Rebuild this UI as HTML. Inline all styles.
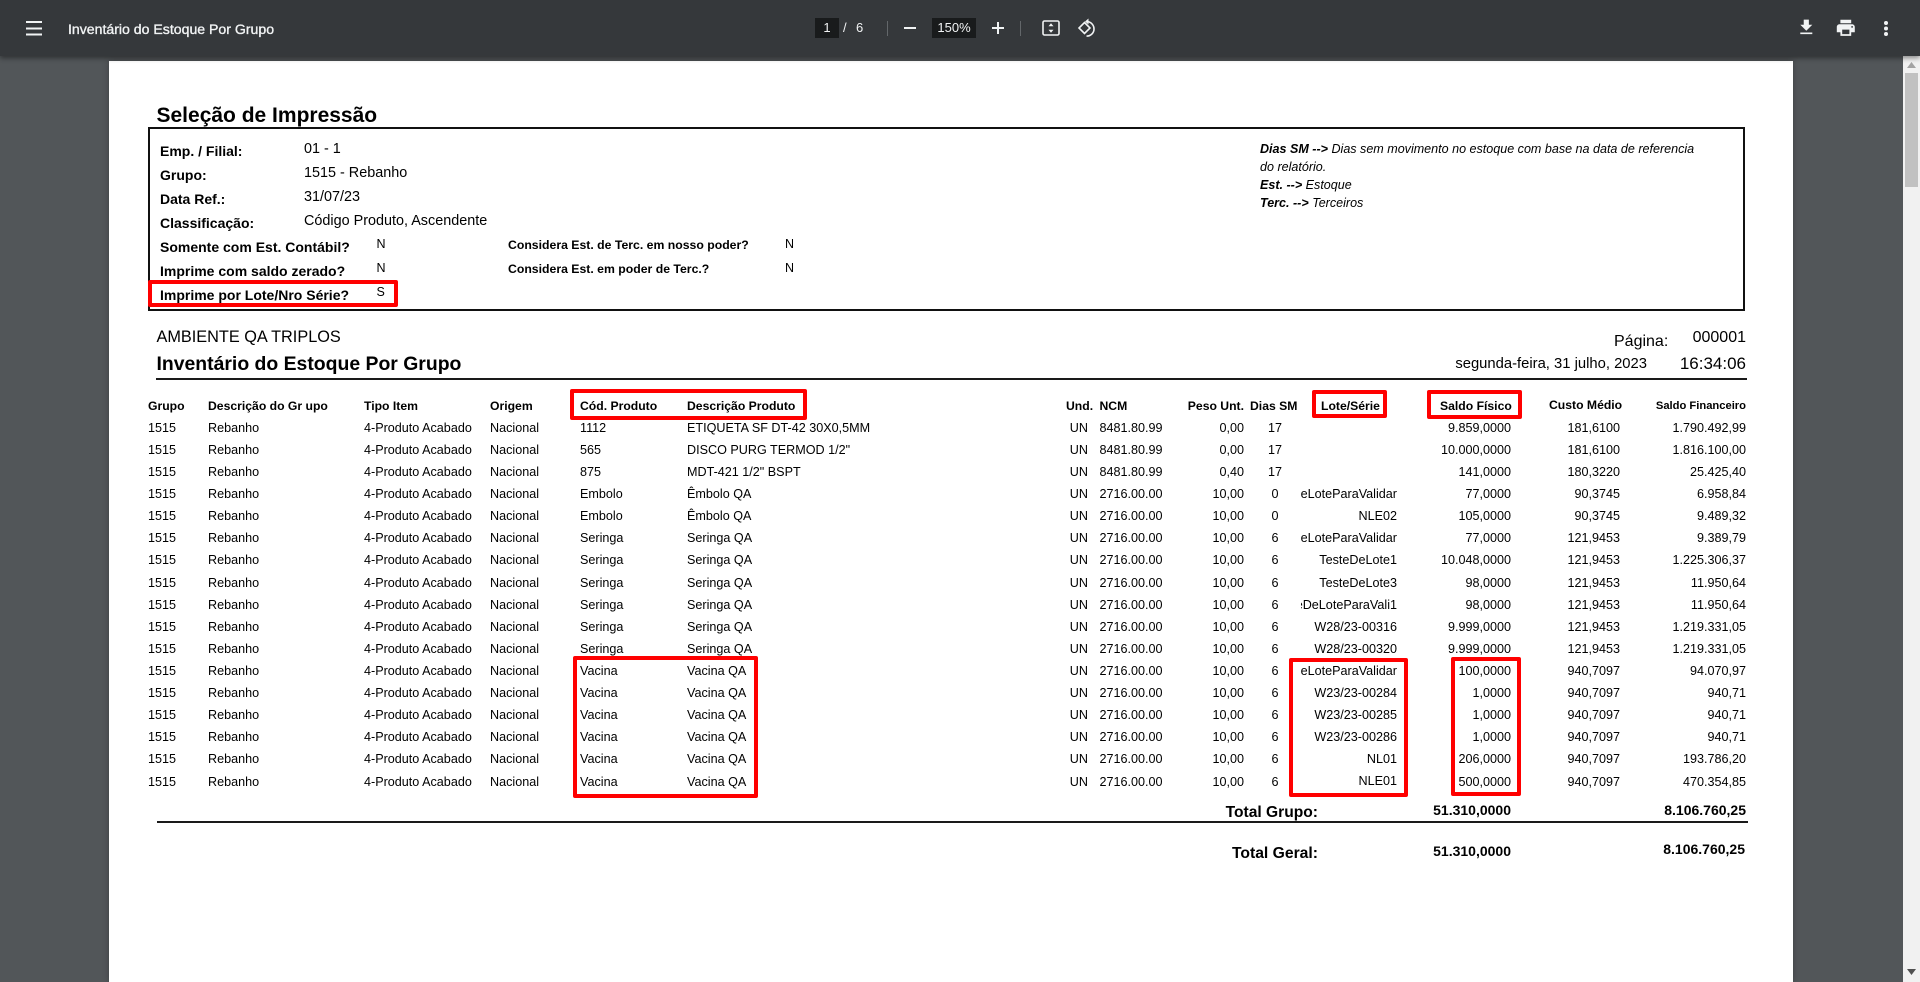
<!DOCTYPE html>
<html lang="pt">
<head>
<meta charset="utf-8">
<title>Inventário do Estoque Por Grupo</title>
<style>
html,body{margin:0;padding:0;width:1920px;height:982px;overflow:hidden;background:#525659}
body{position:relative;font-family:"Liberation Sans",Arial,sans-serif;color:#000}
div,span,svg{position:absolute;white-space:nowrap}
#tb{left:0;top:0;width:1920px;height:56px;background:#35383b;box-shadow:0 2px 5px rgba(0,0,0,.45);z-index:5;color:#f1f3f4}
#pg{left:109px;top:61px;width:1684px;height:921px;background:#fff;box-shadow:0 0 6px rgba(0,0,0,.25)}
#sb{left:1903px;top:56px;width:17px;height:926px;background:#f1f1f1;z-index:4}
#th{left:2px;top:17px;width:13px;height:114px;background:#c1c1c1}
.bx{background:#191b1c;height:20px;top:18px;line-height:20px;text-align:center;font-size:13px}
.sp{width:1px;height:15px;top:21px;background:#63676a}
.a{position:absolute}
.l{font-weight:bold;font-size:14px;left:160px;line-height:20px}
.v{font-size:14.4px;left:304px;line-height:20px}
.n{font-size:12.5px;line-height:16px}
.b{font-weight:bold;font-size:12.25px;line-height:16px}
.i{font-style:italic;font-size:12.55px;left:1260px;line-height:18px}
.r{left:0;width:1920px;height:22px;line-height:22px;font-size:12.6px}
.r span{top:0}
.g{left:148px}.d{left:208px}.t{left:364px}.o{left:490px}.c{left:580px}.e{left:687px}
.u{right:832px}.m{left:1099.5px}.w{right:676px}
.s{left:1255px;width:40px;text-align:center}
.lt{left:1300.5px;width:96.5px;overflow:hidden;display:flex;justify-content:flex-end}
.lt i{font-style:normal;flex:none}
.f{right:409px}.x{right:300px}.y{right:174px}
.h{top:398px;font-weight:bold;font-size:12.2px;line-height:16px}
.red{border:4px solid #f00;border-radius:2px;box-sizing:border-box;z-index:3}
.ln{background:#1a1a1a;height:2px}
</style>
</head>
<body>
<div id="pg"></div>

<div id="tb">
  <svg style="left:26px;top:21px" width="16" height="15" viewBox="0 0 16 15"><path d="M0 1h16M0 7.500h16M0 13.500h16" stroke="#f1f3f4" stroke-width="2"/></svg>
  <span style="left:68px;top:20px;font-size:14.1px;line-height:18px;-webkit-text-stroke:.35px #f1f3f4">Inventário do Estoque Por Grupo</span>
  <div class="bx" style="left:815px;width:24px">1</div>
  <span style="left:843px;top:19px;font-size:13px;line-height:18px">/</span>
  <span style="left:856px;top:19px;font-size:13px;line-height:18px">6</span>
  <div class="sp" style="left:887px"></div>
  <div style="left:904px;top:27px;width:12px;height:2px;background:#f1f3f4"></div>
  <div class="bx" style="left:932px;width:44px">150%</div>
  <svg style="left:992px;top:22px" width="12" height="12" viewBox="0 0 12 12"><path d="M0 6h12M6 0v12" stroke="#f1f3f4" stroke-width="2"/></svg>
  <div class="sp" style="left:1020px"></div>
  <svg style="left:1042px;top:20px" width="18" height="16" viewBox="0 0 18 16"><rect x="1" y="1" width="16" height="14" rx="1.500" fill="none" stroke="#f1f3f4" stroke-width="1.600"/><path d="M9 3.200l2.500 3H6.500zM9 12.800l2.500-3H6.500z" fill="#f1f3f4"/></svg>
  <svg style="left:1077px;top:18px" width="20" height="20" viewBox="0 0 20 20"><path d="M7.500 4.500l5.500 5.500-5.500 5.500-5.500-5.500z" fill="none" stroke="#f1f3f4" stroke-width="1.600"/><path d="M10 3.500a7.500 7.500 0 0 1 7 7.500 7 7 0 0 1-7.500 7" fill="none" stroke="#f1f3f4" stroke-width="1.600"/><path d="M11.500 .500v6l-3.500-3z" fill="#f1f3f4"/></svg>
  <svg style="left:1795.7px;top:17.400px" width="20.600" height="20.600" viewBox="0 0 24 24"><path fill="#f1f3f4" d="M19 9h-4V3H9v6H5l7 7 7-7zM5 18v2h14v-2H5z"/></svg>
  <svg style="left:1835.200px;top:17.300px" width="21.600" height="21.600" viewBox="0 0 24 24"><path fill="#f1f3f4" d="M19 8H5c-1.660 0-3 1.340-3 3v6h4v4h12v-4h4v-6c0-1.660-1.340-3-3-3zm-3 11H8v-5h8v5zm3-7c-.55 0-1-.45-1-1s.45-1 1-1 1 .45 1 1-.45 1-1 1zm-1-9H6v4h12V3z"/></svg>
  <svg style="left:1884px;top:21px" width="4" height="15" viewBox="0 0 4 15"><circle cx="2" cy="2" r="2" fill="#f1f3f4"/><circle cx="2" cy="7.500" r="2" fill="#f1f3f4"/><circle cx="2" cy="13" r="2" fill="#f1f3f4"/></svg>
</div>

<div id="sb">
  <svg style="left:4px;top:6px" width="9" height="6"><path d="M4.500 0L9 6H0z" fill="#a3a3a3"/></svg>
  <div id="th"></div>
  <svg style="left:4px;top:913px" width="9" height="6"><path d="M0 0h9L4.500 6z" fill="#505050"/></svg>
</div>

<span class="a" style="left:156.500px;top:103px;font-size:21px;font-weight:bold;line-height:26px">Seleção de Impressão</span>
<div style="left:148px;top:127px;width:1597px;height:184px;border:2px solid #111;box-sizing:border-box"></div>

<span class="l" style="top:141px">Emp. / Filial:</span>
<span class="l" style="top:165px">Grupo:</span>
<span class="l" style="top:189px">Data Ref.:</span>
<span class="l" style="top:213px">Classificação:</span>
<span class="l" style="top:237px">Somente com Est. Contábil?</span>
<span class="l" style="top:261px">Imprime com saldo zerado?</span>
<span class="l" style="top:285px">Imprime por Lote/Nro Série?</span>
<span class="v" style="top:139px">01 - 1</span>
<span class="v" style="top:163px">1515 - Rebanho</span>
<span class="v" style="top:187px">31/07/23</span>
<span class="v" style="top:211px">Código Produto, Ascendente</span>
<span class="n" style="left:376.500px;top:236px">N</span>
<span class="n" style="left:376.500px;top:260px">N</span>
<span class="n" style="left:376.500px;top:284px">S</span>
<span class="b" style="left:508px;top:237px">Considera Est. de Terc. em nosso poder?</span>
<span class="b" style="left:508px;top:261px">Considera Est. em poder de Terc.?</span>
<span class="n" style="left:785px;top:236px">N</span>
<span class="n" style="left:785px;top:260px">N</span>
<span class="i" style="top:140px"><b>Dias SM --&gt;</b> Dias sem movimento no estoque com base na data de referencia</span>
<span class="i" style="top:158px">do relatório.</span>
<span class="i" style="top:176px"><b>Est. --&gt;</b> Estoque</span>
<span class="i" style="top:194px"><b>Terc. --&gt;</b> Terceiros</span>

<span class="a" style="left:156.500px;top:327px;font-size:16.3px;line-height:20px">AMBIENTE QA TRIPLOS</span>
<span class="a" style="left:156.500px;top:352px;font-size:19.4px;font-weight:bold;line-height:24px">Inventário do Estoque Por Grupo</span>
<span class="a" style="left:1614px;top:332px;font-size:16px;line-height:20px">Página:</span>
<span class="a" style="right:174px;top:328px;font-size:16px;line-height:20px">000001</span>
<span class="a" style="right:273px;top:354px;font-size:14.8px;line-height:20px">segunda-feira, 31 julho, 2023</span>
<span class="a" style="right:174px;top:354px;font-size:17px;line-height:20px">16:34:06</span>
<div class="ln" style="left:155.500px;top:378px;width:1591.500px"></div>

<span class="h g">Grupo</span>
<span class="h d">Descrição do Gr upo</span>
<span class="h t">Tipo Item</span>
<span class="h o">Origem</span>
<span class="h c">Cód. Produto</span>
<span class="h e">Descrição Produto</span>
<span class="h" style="left:1066px">Und.</span>
<span class="h m">NCM</span>
<span class="h" style="right:676px">Peso Unt.</span>
<span class="h" style="left:1250px">Dias SM</span>
<span class="h" style="left:1321px">Lote/Série</span>
<span class="h" style="left:1440px">Saldo Físico</span>
<span class="h" style="left:1549px;top:397px">Custo Médio</span>
<span class="h" style="right:174px;font-size:11.200px">Saldo Financeiro</span>

<div class="r" style="top:417px"><span class="g">1515</span><span class="d">Rebanho</span><span class="t">4-Produto Acabado</span><span class="o">Nacional</span><span class="c">1112</span><span class="e">ETIQUETA SF DT-42 30X0,5MM</span><span class="u">UN</span><span class="m">8481.80.99</span><span class="w">0,00</span><span class="s">17</span><span class="f">9.859,0000</span><span class="x">181,6100</span><span class="y">1.790.492,99</span></div>
<div class="r" style="top:439px"><span class="g">1515</span><span class="d">Rebanho</span><span class="t">4-Produto Acabado</span><span class="o">Nacional</span><span class="c">565</span><span class="e">DISCO PURG TERMOD 1/2"</span><span class="u">UN</span><span class="m">8481.80.99</span><span class="w">0,00</span><span class="s">17</span><span class="f">10.000,0000</span><span class="x">181,6100</span><span class="y">1.816.100,00</span></div>
<div class="r" style="top:461px"><span class="g">1515</span><span class="d">Rebanho</span><span class="t">4-Produto Acabado</span><span class="o">Nacional</span><span class="c">875</span><span class="e">MDT-421 1/2" BSPT</span><span class="u">UN</span><span class="m">8481.80.99</span><span class="w">0,40</span><span class="s">17</span><span class="f">141,0000</span><span class="x">180,3220</span><span class="y">25.425,40</span></div>
<div class="r" style="top:483px"><span class="g">1515</span><span class="d">Rebanho</span><span class="t">4-Produto Acabado</span><span class="o">Nacional</span><span class="c">Embolo</span><span class="e">Êmbolo QA</span><span class="u">UN</span><span class="m">2716.00.00</span><span class="w">10,00</span><span class="s">0</span><span class="lt"><i>TesteDeLoteParaValidar</i></span><span class="f">77,0000</span><span class="x">90,3745</span><span class="y">6.958,84</span></div>
<div class="r" style="top:505px"><span class="g">1515</span><span class="d">Rebanho</span><span class="t">4-Produto Acabado</span><span class="o">Nacional</span><span class="c">Embolo</span><span class="e">Êmbolo QA</span><span class="u">UN</span><span class="m">2716.00.00</span><span class="w">10,00</span><span class="s">0</span><span class="lt"><i>NLE02</i></span><span class="f">105,0000</span><span class="x">90,3745</span><span class="y">9.489,32</span></div>
<div class="r" style="top:527px"><span class="g">1515</span><span class="d">Rebanho</span><span class="t">4-Produto Acabado</span><span class="o">Nacional</span><span class="c">Seringa</span><span class="e">Seringa QA</span><span class="u">UN</span><span class="m">2716.00.00</span><span class="w">10,00</span><span class="s">6</span><span class="lt"><i>TesteDeLoteParaValidar</i></span><span class="f">77,0000</span><span class="x">121,9453</span><span class="y">9.389,79</span></div>
<div class="r" style="top:549px"><span class="g">1515</span><span class="d">Rebanho</span><span class="t">4-Produto Acabado</span><span class="o">Nacional</span><span class="c">Seringa</span><span class="e">Seringa QA</span><span class="u">UN</span><span class="m">2716.00.00</span><span class="w">10,00</span><span class="s">6</span><span class="lt"><i>TesteDeLote1</i></span><span class="f">10.048,0000</span><span class="x">121,9453</span><span class="y">1.225.306,37</span></div>
<div class="r" style="top:572px"><span class="g">1515</span><span class="d">Rebanho</span><span class="t">4-Produto Acabado</span><span class="o">Nacional</span><span class="c">Seringa</span><span class="e">Seringa QA</span><span class="u">UN</span><span class="m">2716.00.00</span><span class="w">10,00</span><span class="s">6</span><span class="lt"><i>TesteDeLote3</i></span><span class="f">98,0000</span><span class="x">121,9453</span><span class="y">11.950,64</span></div>
<div class="r" style="top:594px"><span class="g">1515</span><span class="d">Rebanho</span><span class="t">4-Produto Acabado</span><span class="o">Nacional</span><span class="c">Seringa</span><span class="e">Seringa QA</span><span class="u">UN</span><span class="m">2716.00.00</span><span class="w">10,00</span><span class="s">6</span><span class="lt"><i>TesteDeLoteParaVali1</i></span><span class="f">98,0000</span><span class="x">121,9453</span><span class="y">11.950,64</span></div>
<div class="r" style="top:616px"><span class="g">1515</span><span class="d">Rebanho</span><span class="t">4-Produto Acabado</span><span class="o">Nacional</span><span class="c">Seringa</span><span class="e">Seringa QA</span><span class="u">UN</span><span class="m">2716.00.00</span><span class="w">10,00</span><span class="s">6</span><span class="lt"><i>W28/23-00316</i></span><span class="f">9.999,0000</span><span class="x">121,9453</span><span class="y">1.219.331,05</span></div>
<div class="r" style="top:638px"><span class="g">1515</span><span class="d">Rebanho</span><span class="t">4-Produto Acabado</span><span class="o">Nacional</span><span class="c">Seringa</span><span class="e">Seringa QA</span><span class="u">UN</span><span class="m">2716.00.00</span><span class="w">10,00</span><span class="s">6</span><span class="lt"><i>W28/23-00320</i></span><span class="f">9.999,0000</span><span class="x">121,9453</span><span class="y">1.219.331,05</span></div>
<div class="r" style="top:660px"><span class="g">1515</span><span class="d">Rebanho</span><span class="t">4-Produto Acabado</span><span class="o">Nacional</span><span class="c">Vacina</span><span class="e">Vacina QA</span><span class="u">UN</span><span class="m">2716.00.00</span><span class="w">10,00</span><span class="s">6</span><span class="lt"><i>TesteDeLoteParaValidar</i></span><span class="f">100,0000</span><span class="x">940,7097</span><span class="y">94.070,97</span></div>
<div class="r" style="top:682px"><span class="g">1515</span><span class="d">Rebanho</span><span class="t">4-Produto Acabado</span><span class="o">Nacional</span><span class="c">Vacina</span><span class="e">Vacina QA</span><span class="u">UN</span><span class="m">2716.00.00</span><span class="w">10,00</span><span class="s">6</span><span class="lt"><i>W23/23-00284</i></span><span class="f">1,0000</span><span class="x">940,7097</span><span class="y">940,71</span></div>
<div class="r" style="top:704px"><span class="g">1515</span><span class="d">Rebanho</span><span class="t">4-Produto Acabado</span><span class="o">Nacional</span><span class="c">Vacina</span><span class="e">Vacina QA</span><span class="u">UN</span><span class="m">2716.00.00</span><span class="w">10,00</span><span class="s">6</span><span class="lt"><i>W23/23-00285</i></span><span class="f">1,0000</span><span class="x">940,7097</span><span class="y">940,71</span></div>
<div class="r" style="top:726px"><span class="g">1515</span><span class="d">Rebanho</span><span class="t">4-Produto Acabado</span><span class="o">Nacional</span><span class="c">Vacina</span><span class="e">Vacina QA</span><span class="u">UN</span><span class="m">2716.00.00</span><span class="w">10,00</span><span class="s">6</span><span class="lt"><i>W23/23-00286</i></span><span class="f">1,0000</span><span class="x">940,7097</span><span class="y">940,71</span></div>
<div class="r" style="top:748px"><span class="g">1515</span><span class="d">Rebanho</span><span class="t">4-Produto Acabado</span><span class="o">Nacional</span><span class="c">Vacina</span><span class="e">Vacina QA</span><span class="u">UN</span><span class="m">2716.00.00</span><span class="w">10,00</span><span class="s">6</span><span class="lt"><i>NL01</i></span><span class="f">206,0000</span><span class="x">940,7097</span><span class="y">193.786,20</span></div>
<div class="r" style="top:771px"><span class="g">1515</span><span class="d">Rebanho</span><span class="t">4-Produto Acabado</span><span class="o">Nacional</span><span class="c">Vacina</span><span class="e">Vacina QA</span><span class="u">UN</span><span class="m">2716.00.00</span><span class="w">10,00</span><span class="s">6</span><span class="lt" style="top:-1px"><i>NLE01</i></span><span class="f">500,0000</span><span class="x">940,7097</span><span class="y">470.354,85</span></div>

<span class="a" style="right:602px;top:803px;font-size:15.6px;font-weight:bold;line-height:20px">Total Grupo:</span>
<span class="a" style="right:409px;top:801px;font-size:14px;font-weight:bold;line-height:18px">51.310,0000</span>
<span class="a" style="right:174px;top:801px;font-size:14px;font-weight:bold;line-height:18px">8.106.760,25</span>
<div class="ln" style="left:156.500px;top:821px;width:1591px"></div>
<span class="a" style="right:602px;top:844px;font-size:15.7px;font-weight:bold;line-height:20px">Total Geral:</span>
<span class="a" style="right:409px;top:842px;font-size:14px;font-weight:bold;line-height:18px">51.310,0000</span>
<span class="a" style="right:175px;top:840px;font-size:14px;font-weight:bold;line-height:18px">8.106.760,25</span>

<div class="red" style="left:148px;top:280px;width:250px;height:27px"></div>
<div class="red" style="left:570px;top:389px;width:237px;height:31px"></div>
<div class="red" style="left:1312px;top:390px;width:75px;height:28px"></div>
<div class="red" style="left:1427px;top:390px;width:95px;height:29px"></div>
<div class="red" style="left:573px;top:656px;width:185px;height:142px"></div>
<div class="red" style="left:1289px;top:658px;width:119px;height:139px"></div>
<div class="red" style="left:1451px;top:657px;width:70px;height:139px"></div>
</body>
</html>
